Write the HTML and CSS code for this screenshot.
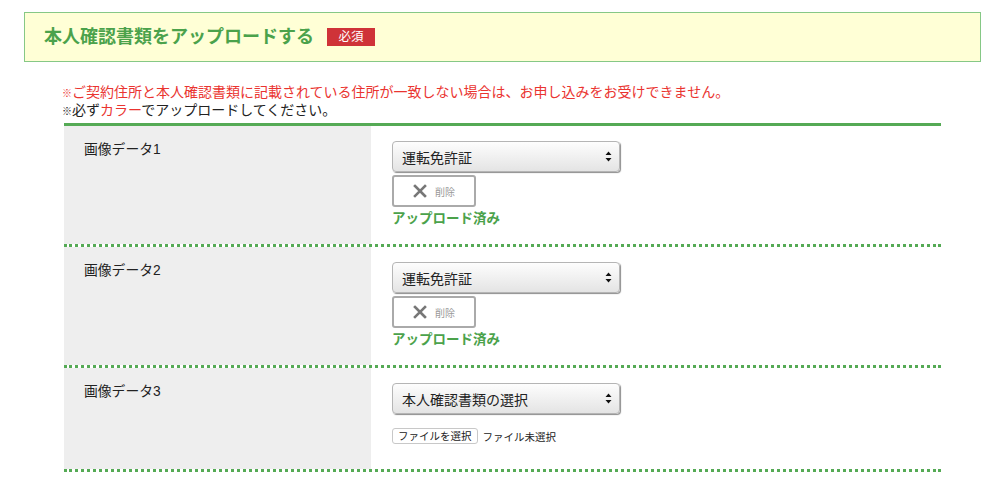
FILE: index.html
```html
<!DOCTYPE html>
<html lang="ja">
<head>
  <meta charset="UTF-8">
  <meta name="viewport" content="width=device-width, initial-scale=1.0">
  <title>本人確認書類のアップロード</title>
  <link rel="stylesheet" href="styles.css">
</head>
<body>

  <div class="section-head">
    <h2>本人確認書類をアップロードする</h2>
    <span class="required">必須</span>
  </div>

  <div class="notes">
    <p class="warn"><span class="mark">※</span>ご契約住所と本人確認書類に記載されている住所が一致しない場合は、お申し込みをお受けできません。</p>
    <p><span class="mark">※</span>必ず<span class="red">カラー</span>でアップロードしてください。</p>
  </div>

  <div class="upload-table">
    <div class="row">
      <div class="label">画像データ1</div>
      <div class="field">
        <div class="select">
          <span>運転免許証</span>
          <svg class="arrows" width="7" height="11" viewBox="0 0 7 11"><path d="M3.5 0.5 L6.5 4 H0.5 Z M3.5 10.5 L6.5 7 H0.5 Z" fill="#111"/></svg>
        </div>
        <button class="delete">
          <svg width="14" height="14" viewBox="0 0 14 14"><path d="M2 2 L12 12 M12 2 L2 12" stroke="#777" stroke-width="2.6" stroke-linecap="square"/></svg>
          <span>削除</span>
        </button>
        <div class="done">アップロード済み</div>
      </div>
    </div>

    <div class="row">
      <div class="label">画像データ2</div>
      <div class="field">
        <div class="select">
          <span>運転免許証</span>
          <svg class="arrows" width="7" height="11" viewBox="0 0 7 11"><path d="M3.5 0.5 L6.5 4 H0.5 Z M3.5 10.5 L6.5 7 H0.5 Z" fill="#111"/></svg>
        </div>
        <button class="delete">
          <svg width="14" height="14" viewBox="0 0 14 14"><path d="M2 2 L12 12 M12 2 L2 12" stroke="#777" stroke-width="2.6" stroke-linecap="square"/></svg>
          <span>削除</span>
        </button>
        <div class="done">アップロード済み</div>
      </div>
    </div>

    <div class="row last">
      <div class="label">画像データ3</div>
      <div class="field">
        <div class="select">
          <span>本人確認書類の選択</span>
          <svg class="arrows" width="7" height="11" viewBox="0 0 7 11"><path d="M3.5 0.5 L6.5 4 H0.5 Z M3.5 10.5 L6.5 7 H0.5 Z" fill="#111"/></svg>
        </div>
        <div class="file">
          <button class="file-btn">ファイルを選択</button>
          <span>ファイル未選択</span>
        </div>
      </div>
    </div>
  </div>

</body>
</html>
```

FILE: styles.css
```css
body {
  margin: 0;
  font-family: "Liberation Sans", "Noto Sans CJK JP", sans-serif;
  background-color: #fff;
  color: #222;
}

.section-head {
  display: flex;
  align-items: center;
  box-sizing: border-box;
  width: 957px;
  height: 50px;
  margin: 12px 0 0 24px;
  padding-left: 19px;
  background-color: #ffffd6;
  border: 1px solid #86c886;
}

.section-head h2 {
  margin: 0;
  font-size: 18px;
  line-height: 24px;
  color: #4ba24b;
  font-weight: bold;
}

.required {
  margin-left: 13px;
  width: 48px;
  height: 18px;
  line-height: 18px;
  text-align: center;
  font-size: 12.5px;
  color: #fff;
  background-color: #cf3338;
}

.notes {
  margin: 22px 0 0 62px;
  font-size: 14px;
  line-height: 17px;
}

.notes p {
  margin: 0;
}

.mark {
  font-size: 10px;
}

.warn, .red {
  color: #ea3430;
}

.upload-table {
  width: 877px;
  margin: 3px 0 0 64px;
  border-top: 3px solid #55aa55;
}

.row {
  display: grid;
  grid-template-columns: 307px 1fr;
  border-bottom: 3px dotted #55aa55;
}

.label {
  background-color: #eee;
  padding: 14px 0 0 20px;
  font-size: 13.8px;
  line-height: 20px;
}

.field {
  padding: 15px 0 17px 21px;
}

.select {
  box-sizing: border-box;
  display: flex;
  align-items: center;
  justify-content: space-between;
  width: 228px;
  height: 31px;
  padding: 0 7px 0 9px;
  font-size: 14px;
  border: 1px solid #b5b5b5;
  border-radius: 4px;
  background: linear-gradient(#fdfdfd, #e4e4e4);
  box-shadow: 1px 1px 1px rgba(0, 0, 0, 0.45);
}

.delete {
  display: flex;
  align-items: center;
  justify-content: center;
  gap: 8px;
  width: 84px;
  height: 32px;
  margin-top: 3px;
  padding: 0;
  background-color: #fff;
  border: 2px solid #aaa;
  border-radius: 3px;
  font-family: inherit;
  font-size: 10px;
  color: #999;
}

.done {
  margin-top: 4px;
  font-size: 13.5px;
  line-height: 16px;
  font-weight: bold;
  color: #4ba24b;
}

.last .field {
  padding-bottom: 25px;
}

.file {
  display: flex;
  align-items: center;
  gap: 5px;
  margin-top: 14px;
  font-size: 10.5px;
}

.file-btn {
  height: 16px;
  padding: 0 5px;
  font-family: inherit;
  font-size: 10.5px;
  line-height: 14px;
  background-color: #fff;
  border: 1px solid #c8c8c8;
  border-radius: 3px;
  color: #222;
}
```
